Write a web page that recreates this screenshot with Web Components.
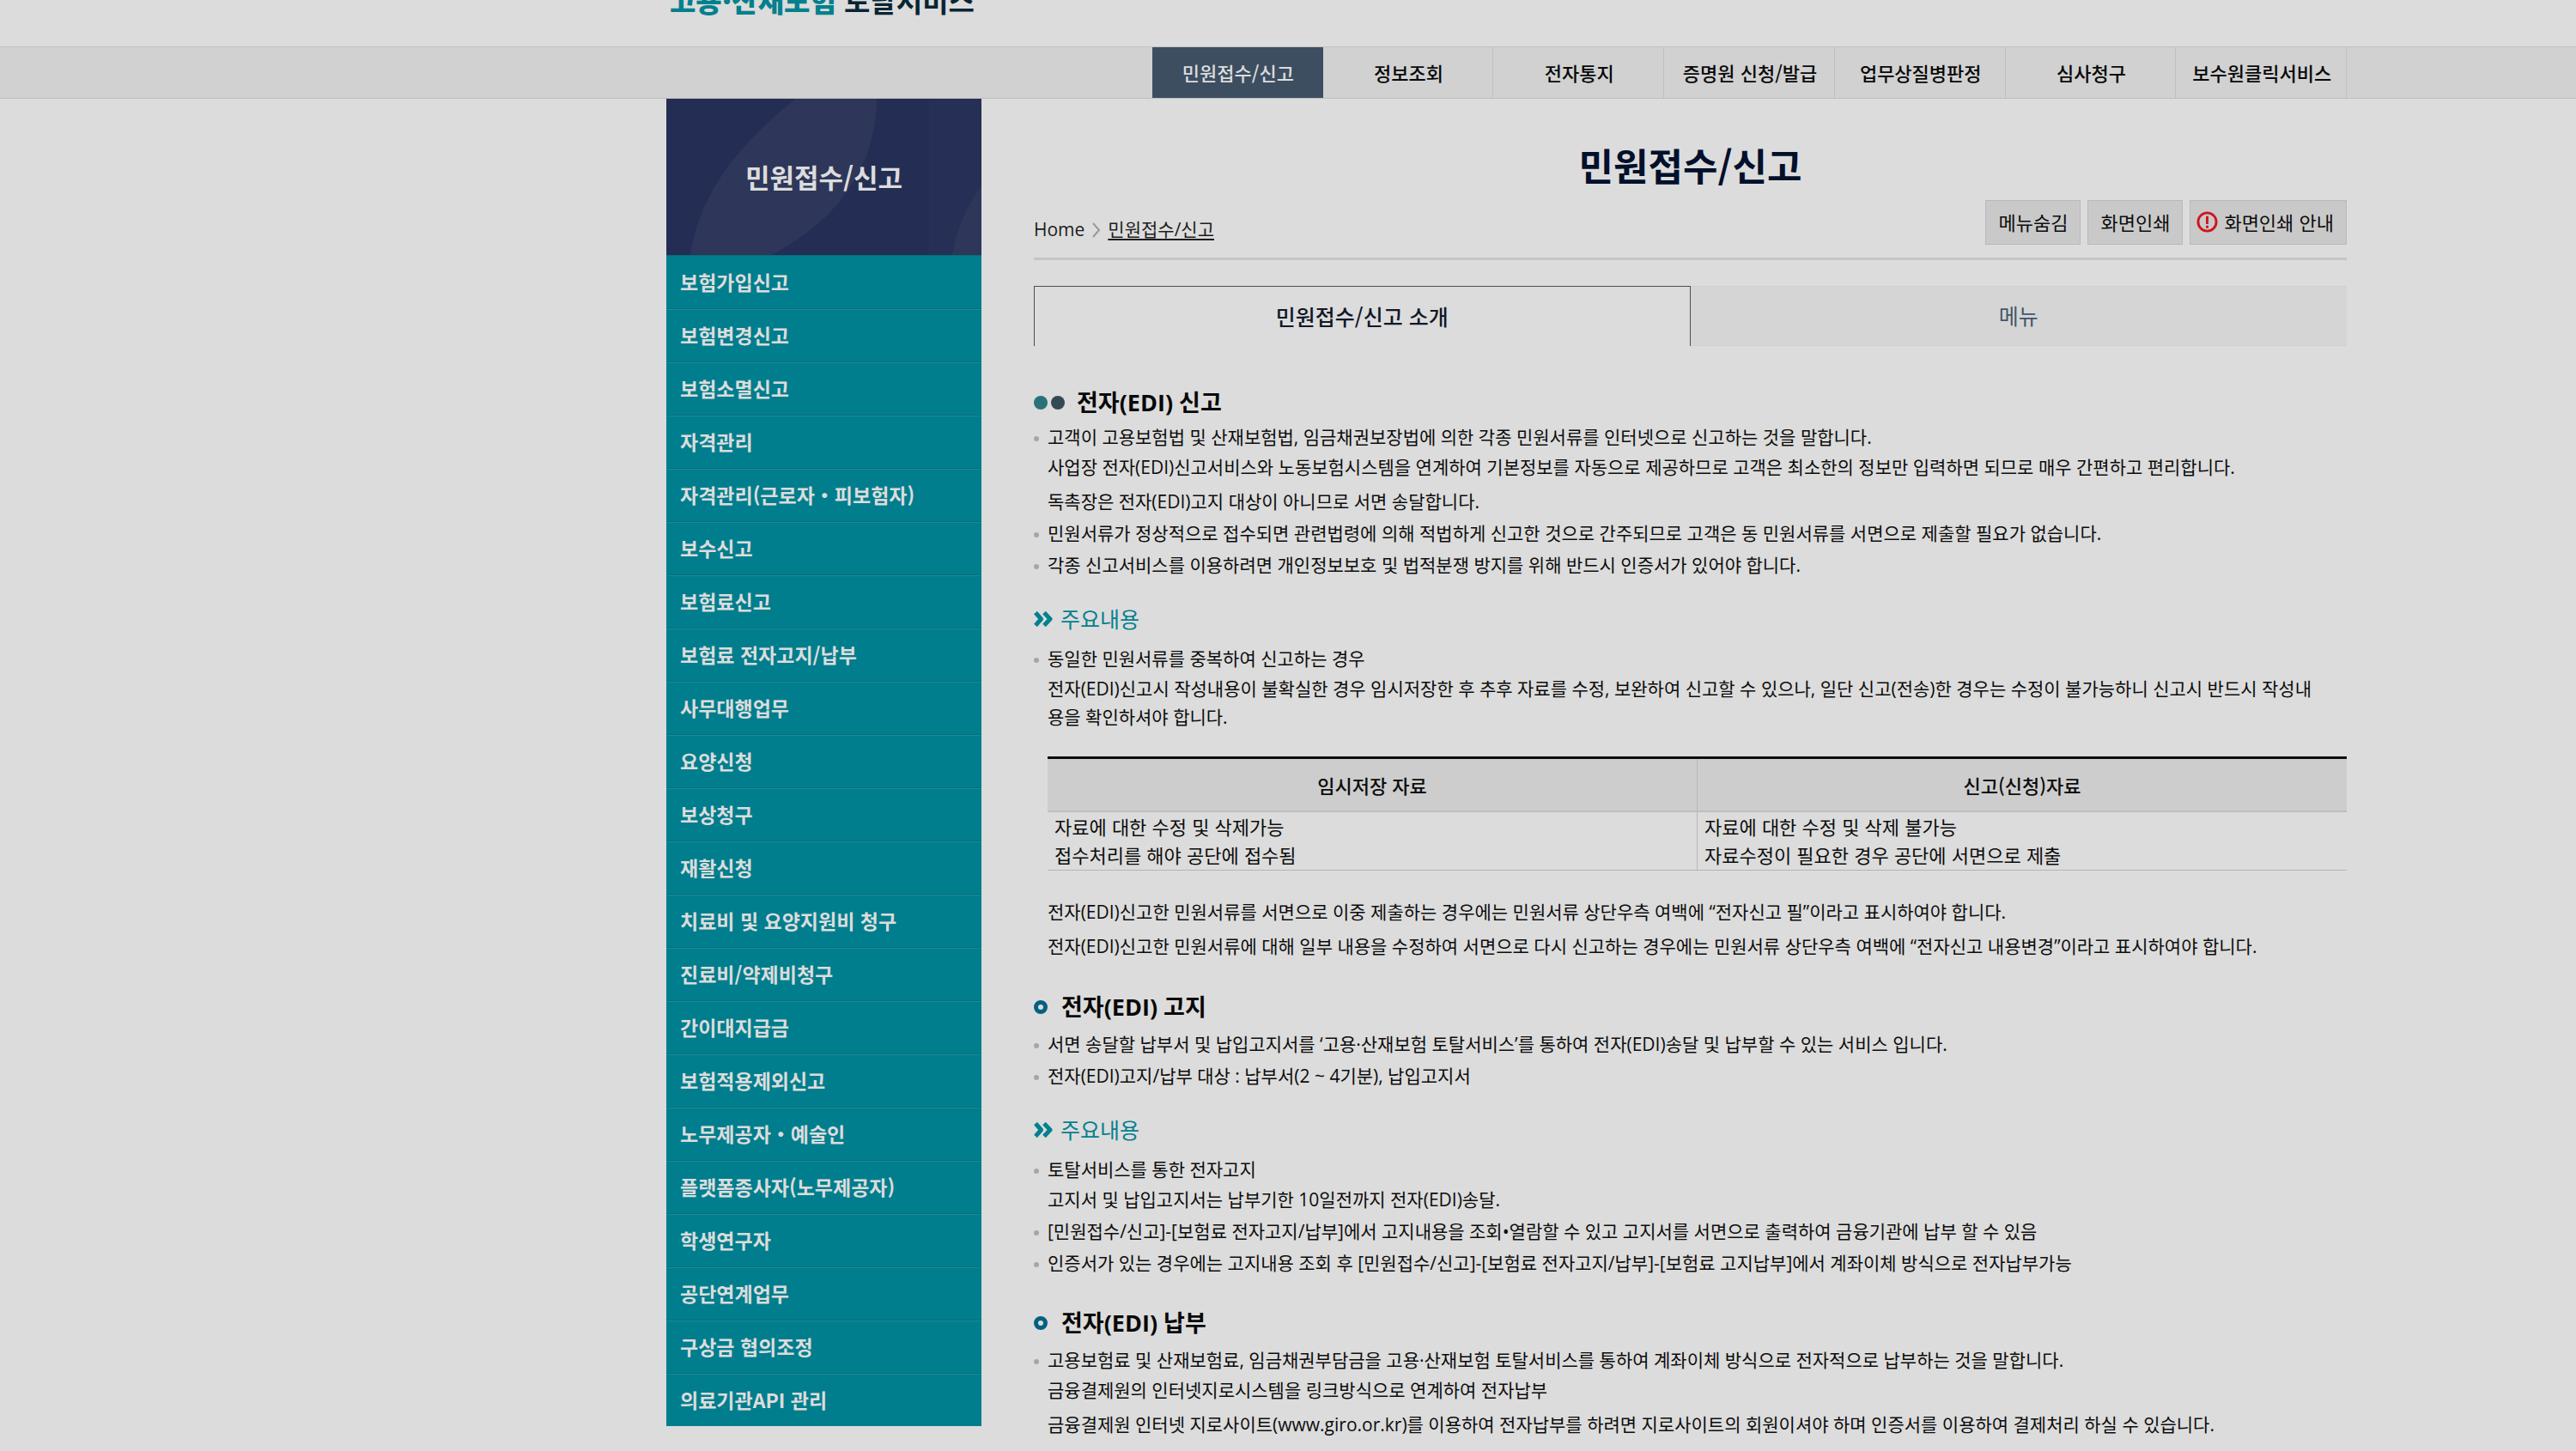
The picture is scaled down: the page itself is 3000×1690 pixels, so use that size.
<!DOCTYPE html>
<html lang="ko">
<head>
<meta charset="utf-8">
<title>고용·산재보험 토탈서비스</title>
<style>
  html { overflow: hidden; }
  body { margin: 0; background: #dcdcdc; color: #0c0c0c; font: 22px/33px "Noto Sans CJK KR", sans-serif; }
</style>
</head>
<body>
<portal-page></portal-page>

<script>
const define = (name, html, setup) => customElements.define(name, class extends HTMLElement {
  constructor() {
    super();
    const root = this.attachShadow({ mode: "open" });
    const t = document.createElement("template");
    t.innerHTML = html;
    root.append(t.content.cloneNode(true));
    if (setup) setup(root, this);
  }
});

define("site-header", `
<style>
  :host { display: block; height: 54px; overflow: hidden; padding: 0 267px 0 780px; }
  a { display: block; margin-top: -24px; font-size: 33px; line-height: 48px; font-weight: 700; color: #0a2532; text-decoration: none; white-space: nowrap; }
  b { color: #04808c; }
</style>
<a href="#"><b>고용·산재보험</b> 토탈서비스</a>`);

define("top-nav", `
<style>
  :host { display: block; background: #d1d1d1; border-top: 1px solid #c3c3c3; border-bottom: 1px solid #bdbdbd; }
  nav { display: flex; width: 1391px; margin: 0 267px 0 auto; }
  a { box-sizing: border-box; flex: 1; height: 59px; padding-left: 2px; line-height: 58px; text-align: center; font-weight: 500; color: #080808; text-decoration: none; white-space: nowrap; border-right: 1px solid #c0c0c0; }
  a[aria-current] { background: #3d4e61; color: #dcdcdc; border-color: #3d4e61; }
</style>
<nav aria-label="주메뉴"></nav>`, root => {
  const nav = root.querySelector("nav");
  ["민원접수/신고","정보조회","전자통지","증명원 신청/발급","업무상질병판정","심사청구","보수원클릭서비스"].forEach((t, i) => {
    const a = document.createElement("a");
    a.href = "#"; a.textContent = t;
    if (!i) a.setAttribute("aria-current", "page");
    nav.append(a);
  });
});

define("side-nav", `
<style>
  :host { display: block; flex: none; width: 367px; }
  .head { height: 182px; background: #242e54; display: grid; }
  svg { grid-area: 1/1; width: 100%; height: 182px; display: block; }
  h2 { grid-area: 1/1; z-index: 1; margin: 0; align-self: center; text-align: center; font-size: 31px; line-height: 48px; font-weight: 700; color: #dcdcdc; }
  ul { list-style: none; margin: 0; padding: 0; background: #007e8d; }
  a { box-sizing: border-box; display: block; height: 62px; line-height: 60px; padding-left: 16px; border-top: 1px solid #026f7d; box-shadow: inset 0 1px #238894; color: #dcdcdc; font-size: 23px; font-weight: 700; text-decoration: none; white-space: nowrap; }
  li:first-child a { box-shadow: none; }
</style>
<div class="head">
  <svg viewBox="0 0 367 182" preserveAspectRatio="none" aria-hidden="true">
    <path fill="#2e3759" d="M28 182C38 112 84 52 151 0H245C244 74 206 138 122 182Z"/>
    <path fill="#283157" d="M306 0H367V182H306Z" opacity=".5"/>
    <path fill="#2e3759" d="M333 182C338 152 351 122 367 102V182Z"/>
  </svg>
  <h2>민원접수/신고</h2>
</div>
<nav aria-label="민원접수/신고"><ul></ul></nav>`, root => {
  const ul = root.querySelector("ul");
  ["보험가입신고","보험변경신고","보험소멸신고","자격관리","자격관리(근로자・피보험자)","보수신고","보험료신고","보험료 전자고지/납부","사무대행업무","요양신청","보상청구","재활신청","치료비 및 요양지원비 청구","진료비/약제비청구","간이대지급금","보험적용제외신고","노무제공자・예술인","플랫폼종사자(노무제공자)","학생연구자","공단연계업무","구상금 협의조정","의료기관API 관리"].forEach(t => {
    const li = document.createElement("li"), a = document.createElement("a");
    a.href = "#"; a.textContent = t; li.append(a); ul.append(li);
  });
});

define("page-head", `
<style>
  :host { display: block; padding-top: 44px; border-bottom: 3px solid #c5c5c5; }
  h1 { margin: 0; text-align: center; font-size: 44px; line-height: 66px; font-weight: 700; color: #02102b; }
  .row { display: flex; justify-content: space-between; align-items: flex-start; padding: 8px 0 15px; }
  nav { display: flex; align-items: center; gap: 8px; margin-top: 18px; color: #1c1c1c; font-family: "Open Sans", "Noto Sans CJK KR", sans-serif; font-size: 21px; }
  nav a { color: inherit; text-decoration: none; }
  nav a:last-child { text-decoration: underline; text-decoration-thickness: 2px; text-underline-offset: 3px; }
  nav svg { width: 11px; height: 18px; }
  .tools { display: flex; gap: 8px; }
  button { display: flex; align-items: center; gap: 7px; height: 52px; padding: 0 14px 2px; background: #c9c9c9; border: 1px solid #b9b9b9; font: 22px/32px "Noto Sans CJK KR", sans-serif; color: #0c0c0c; white-space: nowrap; }
  button.info { padding-left: 7px; }
  button svg { width: 25px; height: 25px; }
</style>
<h1>민원접수/신고</h1>
<div class="row">
  <nav aria-label="현재 위치"><a href="#">Home</a>
    <svg viewBox="0 0 11 18" fill="none" stroke="#999" stroke-width="2" aria-hidden="true"><path d="M2 1L9 9L2 17"/></svg>
    <a href="#">민원접수/신고</a></nav>
  <div class="tools"><button>메뉴숨김</button><button>화면인쇄</button><button class="info">
    <svg viewBox="0 0 26 26" fill="none" stroke="#d0151b" stroke-width="3" aria-hidden="true"><circle cx="13" cy="13" r="11"/><path d="M13 6V15.500M13 17.500V20.500"/></svg>화면인쇄 안내</button></div>
</div>`);

define("tab-bar", `
<style>
  :host { display: block; margin-top: 30px; }
  div { display: grid; grid-template-columns: 1fr 1fr; }
  button { height: 70px; padding: 0 0 2px; font: 25px/36px "Noto Sans CJK KR", sans-serif; color: #44566a; background: #d5d5d5; border: 1px solid #cfcfcf; border-left: 0; border-right: 0; }
  button[aria-selected=true] { background: #dcdcdc; color: #111827; font-weight: 500; border: 1px solid #4a4f55; border-bottom: 0; }
</style>
<div role="tablist"><button role="tab" aria-selected="true">민원접수/신고 소개</button><button role="tab" aria-selected="false">메뉴</button></div>`);

define("section-title", `
<style>
  :host { display: block; margin: 32px 0 6px; }
  h3 { display: flex; align-items: center; gap: 16px; margin: 0; font: 700 27px/42px "Open Sans", "Noto Sans CJK KR", sans-serif; color: #080808; }
  svg { height: 16px; width: 16px; }
  .pair { display: none; width: 36px; }
  :host([kind=pair]) { margin: 45px 0 3px; }
  :host([kind=pair]) h3 { gap: 14px; }
  :host([kind=pair]) .pair { display: block; }
  :host([kind=pair]) .ring { display: none; }
</style>
<h3><svg class="pair" viewBox="0 0 36 16" aria-hidden="true"><circle cx="8" cy="8" r="8" fill="#2b717a"/><circle cx="28" cy="8" r="8" fill="#344a52"/></svg>
<svg class="ring" viewBox="0 0 16 16" aria-hidden="true"><circle cx="8" cy="8" r="5.500" fill="none" stroke="#056080" stroke-width="5"/></svg><span><slot></slot></span></h3>`);

define("sub-title", `
<style>
  :host { display: block; margin: 27px 0 11px; }
  h4 { display: flex; align-items: center; gap: 8px; margin: 0; font-size: 25px; line-height: 38px; font-weight: 400; color: #04808f; }
  svg { width: 23px; height: 18px; }
</style>
<h4><svg viewBox="0 0 23 18" fill="none" stroke="#04808f" stroke-width="5" stroke-linejoin="round" aria-hidden="true"><path d="M2 1.500L8.500 9L2 16.500M12 1.500L19 9L12 16.500"/></svg><span><slot></slot></span></h4>`);

define("bullet-item", `
<style>
  :host { display: flex; gap: 10px; margin-bottom: 4px; }
  i { flex: none; width: 6px; height: 6px; margin-top: 15px; border-radius: 50%; background: #a6a6a6; }
  div { flex: 1; min-width: 0; word-break: break-all; }
</style>
<i></i><div><slot></slot></div>`);

define("note-line", `
<style>
  :host { display: block; padding-top: 2px; }
  :host([follow]) { padding-top: 7px; }
  p { margin: 0; }
</style>
<p><slot></slot></p>`);

define("compare-table", `
<style>
  :host { display: block; margin: 29px 0 30px 16px; font: 22px/33px "Noto Sans CJK KR", sans-serif; }
  table { width: 100%; table-layout: fixed; border-collapse: collapse; border-top: 3px solid #0c0c0c; }
  th { height: 60px; padding: 0; background: #cdcdcd; font-weight: 500; border-bottom: 2px solid #bfbfbf; }
  td { padding: 0 8px 1px; border-bottom: 1px solid #b4b4b4; }
  th + th, td + td { border-left: 1px solid #b8b8b8; }
</style>
<table><thead><tr><th scope="col">임시저장 자료</th><th scope="col">신고(신청)자료</th></tr></thead>
<tbody><tr><td>자료에 대한 수정 및 삭제가능<br>접수처리를 해야 공단에 접수됨</td><td>자료에 대한 수정 및 삭제 불가능<br>자료수정이 필요한 경우 공단에 서면으로 제출</td></tr></tbody></table>`);

define("guide-article", `
<style>
  :host { display: block; font: 21px/33px "Open Sans", "Noto Sans CJK KR", sans-serif; }
  .indent { margin: 0 0 33px 16px; }
</style>
<section-title kind="pair">전자(EDI) 신고</section-title>
<bullet-item>고객이 고용보험법 및 산재보험법, 임금채권보장법에 의한 각종 민원서류를 인터넷으로 신고하는 것을 말합니다.
  <note-line>사업장 전자(EDI)신고서비스와 노동보험시스템을 연계하여 기본정보를 자동으로 제공하므로 고객은 최소한의 정보만 입력하면 되므로 매우 간편하고 편리합니다.</note-line>
  <note-line follow>독촉장은 전자(EDI)고지 대상이 아니므로 서면 송달합니다.</note-line></bullet-item>
<bullet-item>민원서류가 정상적으로 접수되면 관련법령에 의해 적법하게 신고한 것으로 간주되므로 고객은 동 민원서류를 서면으로 제출할 필요가 없습니다.</bullet-item>
<bullet-item>각종 신고서비스를 이용하려면 개인정보보호 및 법적분쟁 방지를 위해 반드시 인증서가 있어야 합니다.</bullet-item>
<sub-title>주요내용</sub-title>
<bullet-item>동일한 민원서류를 중복하여 신고하는 경우
  <note-line>전자(EDI)신고시 작성내용이 불확실한 경우 임시저장한 후 추후 자료를 수정, 보완하여 신고할 수 있으나, 일단 신고(전송)한 경우는 수정이 불가능하니 신고시 반드시 작성내<br>용을 확인하셔야 합니다.</note-line></bullet-item>
<compare-table></compare-table>
<div class="indent"><note-line>전자(EDI)신고한 민원서류를 서면으로 이중 제출하는 경우에는 민원서류 상단우측 여백에 “전자신고 필”이라고 표시하여야 합니다.</note-line>
<note-line follow>전자(EDI)신고한 민원서류에 대해 일부 내용을 수정하여 서면으로 다시 신고하는 경우에는 민원서류 상단우측 여백에 “전자신고 내용변경”이라고 표시하여야 합니다.</note-line></div>
<section-title>전자(EDI) 고지</section-title>
<bullet-item>서면 송달할 납부서 및 납입고지서를 ‘고용·산재보험 토탈서비스’를 통하여 전자(EDI)송달 및 납부할 수 있는 서비스 입니다.</bullet-item>
<bullet-item>전자(EDI)고지/납부 대상 : 납부서(2 ~ 4기분), 납입고지서</bullet-item>
<sub-title>주요내용</sub-title>
<bullet-item>토탈서비스를 통한 전자고지
  <note-line>고지서 및 납입고지서는 납부기한 10일전까지 전자(EDI)송달.</note-line></bullet-item>
<bullet-item>[민원접수/신고]-[보험료 전자고지/납부]에서 고지내용을 조회•열람할 수 있고 고지서를 서면으로 출력하여 금융기관에 납부 할 수 있음</bullet-item>
<bullet-item>인증서가 있는 경우에는 고지내용 조회 후 [민원접수/신고]-[보험료 전자고지/납부]-[보험료 고지납부]에서 계좌이체 방식으로 전자납부가능</bullet-item>
<section-title>전자(EDI) 납부</section-title>
<bullet-item>고용보험료 및 산재보험료, 임금채권부담금을 고용·산재보험 토탈서비스를 통하여 계좌이체 방식으로 전자적으로 납부하는 것을 말합니다.
  <note-line>금융결제원의 인터넷지로시스템을 링크방식으로 연계하여 전자납부</note-line>
  <note-line follow>금융결제원 인터넷 지로사이트(www.giro.or.kr)를 이용하여 전자납부를 하려면 지로사이트의 회원이셔야 하며 인증서를 이용하여 결제처리 하실 수 있습니다.</note-line></bullet-item>`);

define("portal-page", `
<style>
  :host { display: block; }
  .body { display: flex; align-items: flex-start; gap: 61px; padding: 0 267px 0 776px; }
  main { flex: 1; min-width: 0; }
</style>
<site-header></site-header>
<top-nav></top-nav>
<div class="body"><side-nav></side-nav><main><page-head></page-head><tab-bar></tab-bar><guide-article></guide-article></main></div>`);
</script>
</body>
</html>
